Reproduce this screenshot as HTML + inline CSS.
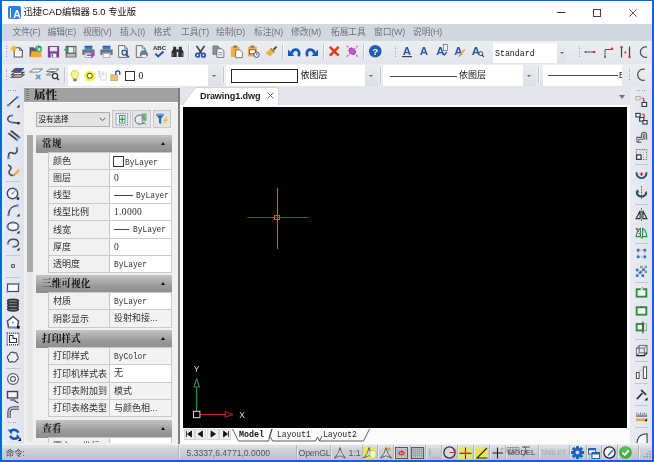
<!DOCTYPE html><html lang="zh"><head><meta charset="utf-8"><title>迅捷CAD编辑器 5.0 专业版</title><style>
*{box-sizing:border-box;margin:0;padding:0}
html,body{width:654px;height:462px;overflow:hidden;background:#fff}
body{position:relative;font-family:"Liberation Sans","Noto Sans CJK SC",sans-serif;font-size:10px;color:#222}
.a{position:absolute}
.mono{font-family:"Liberation Mono","Noto Sans CJK SC",monospace}
.cjk{font-family:"Liberation Sans","Noto Sans CJK SC",sans-serif}
.ser{font-family:"Liberation Serif","Noto Serif CJK SC",serif}
svg{position:absolute;overflow:visible}
.menu span{position:absolute;top:0;line-height:17px;font-size:8.8px;color:#6d727b;letter-spacing:-0.15px;white-space:nowrap}
.sep{position:absolute;width:1px;background:#c2c6cf}
.hsep{position:absolute;height:1px;background:#c2c6cf}
.row{position:absolute;left:48px;width:124px;height:17.2px;border-top:1px solid #c9c9c9}
.row .l{position:absolute;left:0;top:0;width:62px;height:100%;background:#f1f1f1;border-left:1px solid #c9c9c9;border-right:1px solid #c9c9c9;padding:1.200px 0 0 4px;line-height:14.5px;font-size:9px;color:#303030;white-space:nowrap;overflow:hidden}
.row .r{position:absolute;left:62px;top:0;width:62px;height:100%;background:#fff;padding:1px 0 0 4px;line-height:14.5px;font-size:9px;color:#303030;border-right:1px solid #c9c9c9;white-space:nowrap;overflow:hidden}
.sec{position:absolute;left:36px;width:136px;height:17.5px;background:linear-gradient(#c4c4c4,#9a9a9a 60%,#8e8e8e);font-size:9.7px;font-weight:bold;color:#111;line-height:17px;padding-left:6px}
.sec i{position:absolute;right:7px;top:7px;width:0;height:0;border-left:2.5px solid transparent;border-right:2.5px solid transparent;border-bottom:3px solid #111}
.sd{font-family:"Liberation Serif",serif;font-size:9.6px;letter-spacing:.3px}
.sx{display:inline-block;transform:scaleX(.82);transform-origin:0 50%;font-family:"Liberation Mono",monospace;font-size:9.6px}
</style></head><body><div id="root" style="position:absolute;left:0;top:0;width:654px;height:462px;will-change:transform">
<div class="a" style="left:0;top:0;width:654px;height:462px;background:#0b66d8"></div>
<div class="a" style="left:2px;top:1.3px;width:649.500px;height:458.5px;background:#e6e9ee"></div>
<div class="a" style="left:2px;top:1.3px;width:649.500px;height:22.700px;background:#fff"></div>
<div class="a" style="left:8px;top:6px;width:12.5px;height:12.5px;border-radius:2px;background:linear-gradient(#2d7cea,#3b78e0)"></div>
<div class="a" style="left:10.4px;top:8px;width:1.100px;height:10px;background:#e6efff"></div>
<div class="a" style="left:12.8px;top:7.5px;width:8px;font-size:11.3px;line-height:12.5px;font-weight:bold;color:#fff;text-align:center;transform:scaleX(.92)">A</div>
<div class="a" style="left:23.5px;top:1px;height:23px;line-height:23px;font-size:9.35px;color:#111;white-space:nowrap">迅捷CAD编辑器 5.0 专业版</div>
<div class="a" style="left:557px;top:12px;width:8px;height:1px;background:#333"></div>
<div class="a" style="left:593px;top:9px;width:7.500px;height:7.500px;border:1px solid #444"></div>
<svg style="left:629px;top:8.800px" width="8" height="8" viewBox="0 0 8 8"><path d="M.3.300l7.400 7.400M7.700.300l-7.400 7.400" stroke="#444" stroke-width=".9" fill="none"/></svg>
<div class="a menu" style="left:2px;top:24px;width:650px;height:17px;background:#d3d7df">
<span style="left:10.5px">文件(F)</span>
<span style="left:45.5px">编辑(E)</span>
<span style="left:81px">视图(V)</span>
<span style="left:118px">插入(I)</span>
<span style="left:151.5px">格式</span>
<span style="left:179px">工具(T)</span>
<span style="left:214px">绘制(D)</span>
<span style="left:252px">标注(N)</span>
<span style="left:289px">修改(M)</span>
<span style="left:329px">拓展工具</span>
<span style="left:372px">窗口(W)</span>
<span style="left:411px">说明(H)</span>
</div>
<div class="a" style="left:2px;top:41px;width:650px;height:23px;background:linear-gradient(#eceef2,#e2e5eb)"></div>
<div class="a" style="left:2px;top:64px;width:650px;height:23px;background:linear-gradient(#eceef2,#e2e5eb)"></div>
<div class="a" style="left:5.5px;top:46px;width:1px;height:12px;background:repeating-linear-gradient(#9aa0aa 0 1px,transparent 1px 2.4px)"></div>
<svg style="left:11.3px;top:45px" width="13" height="13" viewBox="0 0 12 12"><path d="M3 2.5h5l2.5 2.5v6h-7.5z" fill="#fff" stroke="#555" stroke-width="1"/><path d="M8 2.5v2.5h2.5" fill="none" stroke="#555" stroke-width=".8"/><path d="M2.5 0l.8 1.7 1.7-.8-.8 1.7 1.7.8-1.700.8.800 1.700-1.700-.8-.8 1.700-.8-1.700-1.700.8.800-1.700-1.700-.8 1.700-.8-.8-1.700 1.700.8z" fill="#f5b730"/></svg>
<svg style="left:28.9px;top:45px" width="13" height="13" viewBox="0 0 12 12"><path d="M.5 2h3.800l1 1.300h2.500v7.700h-7.300z" fill="#585d64"/><path d="M1.300 11.300l1-5.600h9.300v5.600z" fill="#f6a834"/><circle cx="8.900" cy="3.500" r="3" fill="#2aa565"/><path d="M7.600 2.300l2.400 2.400m0-2.100v2.100h-2.100" stroke="#fff" stroke-width=".9" fill="none"/></svg>
<svg style="left:46.5px;top:45px" width="13" height="13" viewBox="0 0 12 12"><path d="M.8 1h10.400v10.500h-10.400z" fill="#7a3f98"/><rect x="2.600" y="1.800" width="6.800" height="4" fill="#e8e6ea"/><rect x="3.400" y="8" width="5.200" height="3.500" fill="#f4f2f6"/><rect x="4.300" y="8.600" width="1.300" height="2.300" fill="#7a3f98"/></svg>
<svg style="left:63.9px;top:45px" width="13" height="13" viewBox="0 0 12 12"><rect x="1.500" y=".8" width="10" height="10.700" fill="#5c5f63"/><rect x="4" y="2" width="4.500" height="5" fill="#f2f2f2"/><rect x="9" y="2" width="1.600" height="5" fill="#c9c9c9"/><rect x="2.500" y="8.200" width="8" height="2.600" fill="#bdbdbd"/><path d="M0 4.500h3.500m-1.500-1.800l1.800 1.800-1.800 1.800" stroke="#21a366" stroke-width="1.200" fill="none"/></svg>
<svg style="left:81.7px;top:45px" width="13" height="13" viewBox="0 0 12 12"><rect x="2.500" y=".8" width="7" height="3.500" fill="#2f7fd6"/><rect x="2.500" y=".8" width="7" height="1.200" fill="#1c5fb0"/><path d="M.3 4.200h11.400v5h-2v-2h-7.400v2h-2z" fill="#6f7379"/><rect x="2.900" y="7.600" width="6.200" height="3.800" fill="#fafafa" stroke="#8a8d92" stroke-width=".6"/><path d="M4.500 9.500h6m-2-2.200l2.200 2.200-2.200 2.200" stroke="#a03fc8" stroke-width="1.400" fill="none"/></svg>
<svg style="left:99.5px;top:45px" width="13" height="13" viewBox="0 0 12 12"><rect x="2.500" y=".8" width="7" height="3.500" fill="#2f7fd6"/><rect x="2.500" y=".8" width="7" height="1.200" fill="#1c5fb0"/><path d="M.3 4.200h11.400v5h-2v-2h-7.400v2h-2z" fill="#6f7379"/><rect x="2.900" y="7.600" width="6.200" height="3.800" fill="#fafafa" stroke="#8a8d92" stroke-width=".6"/></svg>
<svg style="left:117.3px;top:45px" width="13" height="13" viewBox="0 0 12 12"><path d="M1.500.6h5.500l2.500 2.500v8.300h-8z" fill="#fdfdfd" stroke="#666" stroke-width=".9"/><path d="M7 .6v2.500h2.500" fill="#ddd" stroke="#666" stroke-width=".7"/><circle cx="6.800" cy="7" r="2.300" fill="#cfe3f7" stroke="#1d4f95" stroke-width="1.100"/><path d="M8.500 8.800l2.500 2.600" stroke="#1d4f95" stroke-width="1.500"/></svg>
<svg style="left:135.1px;top:45px" width="13" height="13" viewBox="0 0 12 12"><path d="M1.200.6h5.500l2.500 2.500v8.300h-8z" fill="#e8f3fb" stroke="#666" stroke-width=".9"/><path d="M6.700.6v2.500h2.500" fill="#ddd" stroke="#666" stroke-width=".7"/><rect x="5.800" y="5" width="4.800" height="2" fill="#2f7fd6"/><path d="M4.600 6.800h7.200v3.400h-7.200z" fill="#6f7379"/><rect x="6" y="9" width="4.400" height="2.600" fill="#fafafa" stroke="#888" stroke-width=".5"/></svg>
<svg style="left:153px;top:45px" width="13" height="13" viewBox="0 0 12 12"><text x="6" y="5" font-family="Liberation Sans,sans-serif" font-weight="bold" font-size="5.600" text-anchor="middle" fill="#2b2b2b">ABC</text><path d="M2.200 8l2.500 2.500 5-4.500" stroke="#1d4fae" stroke-width="1.800" fill="none"/></svg>
<svg style="left:170.7px;top:45px" width="13" height="13" viewBox="0 0 12 12"><path d="M2 1.500h2.800v3.500l.5 1v5h-4.800v-5l1.500-2zM7.200 1.500h2.800v2.500l1.500 2v5h-4.800v-5l.5-1z" fill="#2e2e2e"/><rect x="4.800" y="4" width="2.400" height="2.500" fill="#2e2e2e"/><rect x="1.200" y="7.500" width="1" height="3" fill="#777"/><rect x="9.800" y="7.500" width="1" height="3" fill="#777"/></svg>
<div class="sep" style="left:187.5px;top:44px;height:15px"></div>
<div class="sep" style="left:188.5px;top:44px;height:15px;background:#f6f7f9"></div>
<svg style="left:194px;top:45px" width="13" height="13" viewBox="0 0 12 12"><path d="M2.300.8l4.800 7M9.700.8l-4.800 7" stroke="#3c3f44" stroke-width="1.500" fill="none"/><circle cx="3.300" cy="9.400" r="1.700" fill="none" stroke="#1d57b5" stroke-width="1.500"/><circle cx="8.700" cy="9.400" r="1.700" fill="none" stroke="#1d57b5" stroke-width="1.500"/></svg>
<svg style="left:211.7px;top:45px" width="13" height="13" viewBox="0 0 12 12"><path d="M.8.800h4.500l2 2v6h-6.500z" fill="#8a8d91" stroke="#6a6d71" stroke-width=".6"/><path d="M4.500 3.500h4.500l2 2v6h-6.500z" fill="#eef3f8" stroke="#6a6d71" stroke-width=".8"/><path d="M6 7h3.500M6 9h3.500" stroke="#5a96d8" stroke-width=".8"/></svg>
<svg style="left:229.5px;top:45px" width="13" height="13" viewBox="0 0 12 12"><rect x=".8" y="1.500" width="8" height="9.500" rx=".8" fill="#f5ad3c"/><rect x="3" y=".5" width="3.600" height="2" fill="#7a7a7a"/><path d="M5.200 4.500h4l2.200 2.200v5h-6.200z" fill="#fdfdfd" stroke="#666" stroke-width=".8"/></svg>
<svg style="left:247.3px;top:45px" width="13" height="13" viewBox="0 0 12 12"><rect x=".8" y="1.500" width="8.500" height="9" rx=".8" fill="#f5ad3c"/><rect x="3.200" y=".5" width="3.600" height="2" fill="#7a7a7a"/><rect x="2.300" y="4.500" width="5.500" height="3.600" fill="#fff" stroke="#555" stroke-width=".8"/><circle cx="8.800" cy="9" r="2.500" fill="#f4f8fc" stroke="#2d4f80" stroke-width=".9"/><path d="M8.800 7.600v1.500h1.200" stroke="#2d4f80" stroke-width=".7" fill="none"/></svg>
<svg style="left:265.3px;top:45px" width="13" height="13" viewBox="0 0 12 12"><path d="M1 7.200l4.800-4.500 3.300 3.600-4.800 4.500z" fill="#f2b24a"/><path d="M4.800 3.600l.9-.9 3.400 3.600-.9.900z" fill="#a8782c"/><path d="M7.300 3.800l2.700-2.900 1.300 1.200-2.700 2.900z" fill="#4a4a4a"/><path d="M1 7.200l1.200 1.300M2.200 6.100l1.300 1.400" stroke="#c98c30" stroke-width=".5"/></svg>
<div class="sep" style="left:282px;top:44px;height:15px"></div>
<div class="sep" style="left:283px;top:44px;height:15px;background:#f6f7f9"></div>
<svg style="left:288.3px;top:46px" width="12" height="12" viewBox="0 0 12 12"><path d="M3.800 7.800c.2-5.500 7.400-5.500 7.400-.3 0 1-.4 2-1 2.600" fill="none" stroke="#1557c0" stroke-width="2.700"/><path d="M0 3.600v6.400h6.400z" fill="#1557c0"/></svg>
<svg style="left:306px;top:46px" width="12" height="12" viewBox="0 0 12 12"><path d="M8.200 7.800c-.2-5.500-7.400-5.500-7.400-.3 0 1 .4 2 1 2.600" fill="none" stroke="#1557c0" stroke-width="2.700"/><path d="M12 3.600v6.400h-6.400z" fill="#1557c0"/></svg>
<div class="sep" style="left:322.5px;top:44px;height:15px"></div>
<div class="sep" style="left:323.5px;top:44px;height:15px;background:#f6f7f9"></div>
<svg style="left:327.95px;top:45.25px" width="12.5" height="12.5" viewBox="0 0 12 12"><path d="M1.800 1.800l8.400 8.400M10.200 1.800l-8.400 8.400" stroke="#e03a1a" stroke-width="2.400" fill="none"/></svg>
<svg style="left:346.35px;top:45.25px" width="12.5" height="12.5" viewBox="0 0 12 12"><path d="M.8.800l10.400 10.400M11.200.8l-10.400 10.400" stroke="#d63ad0" stroke-width="1.100" stroke-dasharray="2 1.200" fill="none"/><rect x="2.400" y="3.300" width="7.200" height="5.400" rx="1.600" transform="rotate(40 6 6)" fill="#b946c8"/><rect x="4.300" y="4.700" width="3.400" height="2.600" rx=".9" transform="rotate(40 6 6)" fill="#8f8f9a"/></svg>
<div class="sep" style="left:363px;top:44px;height:15px"></div>
<div class="sep" style="left:364px;top:44px;height:15px;background:#f6f7f9"></div>
<svg style="left:369.05px;top:45.25px" width="12.5" height="12.5" viewBox="0 0 12 12"><circle cx="6" cy="6" r="6" fill="#1f5fb4"/><text x="6" y="9.300" font-family="Liberation Sans,sans-serif" font-weight="bold" font-size="9.500" text-anchor="middle" fill="#fff">?</text></svg>
<div class="a" style="left:394.5px;top:46px;width:1px;height:12px;background:repeating-linear-gradient(#9aa0aa 0 1px,transparent 1px 2.4px)"></div>
<svg style="left:400.5px;top:45px" width="12" height="12" viewBox="0 0 12 12"><text x="6" y="10" font-family="Liberation Sans,sans-serif" font-weight="bold" font-size="11.500" text-anchor="middle" fill="#2b56a8">A</text><rect x="1" y="11" width="10" height="1.200" fill="#444"/></svg>
<svg style="left:418px;top:45px" width="12" height="12" viewBox="0 0 12 12"><text x="6" y="10" font-family="Liberation Sans,sans-serif" font-weight="bold" font-size="11.500" text-anchor="middle" fill="#2b56a8">A</text></svg>
<svg style="left:436px;top:45px" width="12" height="12" viewBox="0 0 12 12"><text x="4.5" y="10" font-family="Liberation Sans,sans-serif" font-weight="bold" font-size="11.500" text-anchor="middle" fill="#2b56a8">A</text><rect x="7.500" y="-.5" width="3.800" height="6" fill="#f4f4f4" stroke="#666" stroke-width=".7"/><path d="M7 8.500l1.300 1.500 2.500-3" stroke="#1d57b5" stroke-width="1.200" fill="none"/></svg>
<svg style="left:453.5px;top:45px" width="12" height="12" viewBox="0 0 12 12"><text x="4.5" y="10" font-family="Liberation Sans,sans-serif" font-weight="bold" font-size="11.500" text-anchor="middle" fill="#2b56a8">A</text><path d="M5.200 10.800l5.600-6.300" stroke="#f0a63a" stroke-width="1.800"/><path d="M4.500 11.800l.7-1.600 .9.900z" fill="#555"/></svg>
<svg style="left:471.5px;top:45px" width="12" height="12" viewBox="0 0 12 12"><text x="4" y="10" font-family="Liberation Sans,sans-serif" font-weight="bold" font-size="11.500" text-anchor="middle" fill="#2b56a8">A</text><circle cx="8.800" cy="8.600" r="2" fill="#eef3f8" stroke="#333" stroke-width=".9"/><path d="M10.200 10.200l1.600 1.700" stroke="#333" stroke-width="1.200"/></svg>
<div class="a" style="left:492.700px;top:43px;width:73.500px;height:20px;background:#fff"></div>
<div class="a" style="left:556.5px;top:43px;width:9.700px;height:20px;background:linear-gradient(#e9ebef,#dcdfe5)"></div>
<div class="a" style="left:559.5px;top:52px;width:0;height:0;border-left:2.2px solid transparent;border-right:2.2px solid transparent;border-top:2.6px solid #666"></div>
<div class="a" style="left:494.5px;top:46.7px;line-height:12px;color:#111"><span class="sx" style="transform:scaleX(.86)">Standard</span></div>
<div class="a" style="left:578.5px;top:46px;width:1px;height:12px;background:repeating-linear-gradient(#9aa0aa 0 1px,transparent 1px 2.4px)"></div>
<svg style="left:584.3px;top:45.5px" width="12" height="12" viewBox="0 0 12 12"><path d="M1.500 6h8" stroke="#555" stroke-width="1"/><circle cx="1.500" cy="6" r="1" fill="#555"/><circle cx="10" cy="6" r="1.300" fill="#e8302a"/></svg>
<svg style="left:601.8px;top:45.5px" width="12" height="12" viewBox="0 0 12 12"><path d="M3 11v-7.500h6" stroke="#555" stroke-width="1" fill="none"/><circle cx="3" cy="11" r="1" fill="#555"/><circle cx="10" cy="2.800" r="1.300" fill="#e8302a"/></svg>
<svg style="left:619.2px;top:45.5px" width="12" height="12" viewBox="0 0 12 12"><path d="M2.500 .5v11M10.500 .5v11" stroke="#444" stroke-width="1.200"/><circle cx="2.500" cy="1.200" r="1.200" fill="#e8302a"/><circle cx="6.300" cy="6.500" r="1.100" fill="#e8302a"/><circle cx="10.500" cy="11" r="1.200" fill="#e8302a"/></svg>
<svg style="left:637px;top:45.5px" width="12" height="12" viewBox="0 0 12 12"><path d="M10 1.200a5.200 5.200 0 1 0 0 10" stroke="#555" stroke-width="1.200" fill="none"/></svg>
<div class="a" style="left:5.5px;top:69px;width:1px;height:12px;background:repeating-linear-gradient(#9aa0aa 0 1px,transparent 1px 2.4px)"></div>
<svg style="left:10.95px;top:67.45px" width="13.5" height="13.5" viewBox="0 0 12 12"><path d="M.5 9l3-2.200h8l-3 2.200z" fill="#fff" stroke="#444" stroke-width=".9"/><path d="M.5 6.800l3-2.200h8l-3 2.200z" fill="#fff" stroke="#444" stroke-width=".9"/><path d="M.5 4.200l3-2.800h8l-3 2.800z" fill="#2d5fa8" stroke="#2a4f88" stroke-width=".8"/><circle cx="5" cy="4.200" r="1.300" fill="#e02a2a"/></svg>
<svg style="left:28.75px;top:67.45px" width="13.5" height="13.5" viewBox="0 0 12 12"><path d="M.5 4.500l3.500-2.700h8l-3.500 2.700z" fill="#fff" stroke="#6a6d72" stroke-width=".8"/><path d="M6.200 6.800l4 4m0-4l-4 4" stroke="#5a9ad8" stroke-width="1.200"/><rect x="7" y="7.600" width="2.400" height="2.400" fill="#5a9ad8"/></svg>
<svg style="left:46.25px;top:67.45px" width="13.5" height="13.5" viewBox="0 0 12 12"><path d="M.5 4l3-2.200h8l-3 2.200z" fill="#fff" stroke="#6a6d72" stroke-width=".8"/><path d="M.5 7l3-2.200h4" fill="none" stroke="#6a6d72" stroke-width=".8"/><path d="M.5 7h4.500" stroke="#6a6d72" stroke-width=".8"/><circle cx="8" cy="8" r="2.300" fill="#f2f4f6" stroke="#333" stroke-width="1.100"/><path d="M9.700 9.700l1.800 1.800" stroke="#333" stroke-width="1.300"/></svg>
<div class="sep" style="left:64px;top:67px;height:16px"></div>
<div class="sep" style="left:65px;top:67px;height:16px;background:#f6f7f9"></div>
<div class="a" style="left:67.5px;top:64.600px;width:153px;height:21.200px;background:#fff"></div>
<div class="a" style="left:208px;top:64.600px;width:12.5px;height:21.200px;background:linear-gradient(#e9ebef,#dcdfe5)"></div>
<div class="a" style="left:211.5px;top:75px;width:0;height:0;border-left:2.2px solid transparent;border-right:2.2px solid transparent;border-top:2.6px solid #666"></div>
<svg style="left:69.3px;top:70px" width="11.8" height="11.8" viewBox="0 0 12 12"><path d="M6 .5c-2.400 0-3.900 1.800-3.900 3.700 0 1.800 1.600 2.800 1.900 4.800h4c.3-2 1.900-3 1.900-4.800 0-1.900-1.500-3.700-3.900-3.700z" fill="#f8f587" stroke="#b9b56a" stroke-width=".7"/><rect x="4.300" y="9" width="3.400" height="2.500" rx=".6" fill="#777"/></svg>
<svg style="left:83.55px;top:69.95px" width="11.5" height="11.5" viewBox="0 0 12 12"><path d="M6 0l1.400 2 2.300-.8-.1 2.500 2.400.7-1.500 1.900 1.500 2-2.400.6.100 2.500-2.300-.8-1.400 2-1.400-2-2.300.8.100-2.500-2.400-.6 1.500-2-1.500-1.900 2.400-.7-.1-2.500 2.300.8z" fill="#f2ee18"/><circle cx="6" cy="6" r="2.600" fill="#fffef0" stroke="#3a3a20" stroke-width=".9"/></svg>
<svg style="left:96.75px;top:69.95px" width="11.5" height="11.5" viewBox="0 0 12 12"><path d="M1 2h3M1 4h3M2.500 1v4M5.500 1.500v4M7 1v5M1 6.500h4" stroke="#c8ccd2" stroke-width=".8" fill="none"/><path d="M4 5v5.500h5.500v-8" stroke="#d5d8dc" stroke-width="1" fill="none"/></svg>
<svg style="left:110.25px;top:69.95px" width="11.5" height="11.5" viewBox="0 0 12 12"><rect x=".8" y="5" width="6.800" height="6.200" fill="#e6c27a" stroke="#b8924a" stroke-width=".6"/><path d="M6 5v-2.200c0-2.400 4.200-2.400 4.200 0v2.200" fill="none" stroke="#1f3f9a" stroke-width="1.300"/></svg>
<div class="a" style="left:124.5px;top:70.5px;width:10px;height:10.5px;border:1.2px solid #333;background:#fff"></div>
<div class="a" style="left:138.5px;top:69.5px;line-height:12px;color:#111"><span class="sd">0</span></div>
<div class="sep" style="left:222.5px;top:67px;height:16px"></div>
<div class="sep" style="left:223.5px;top:67px;height:16px;background:#f6f7f9"></div>
<div class="a" style="left:225.5px;top:64.600px;width:152px;height:21.200px;background:#fff"></div>
<div class="a" style="left:365px;top:64.600px;width:12.5px;height:21.200px;background:linear-gradient(#e9ebef,#dcdfe5)"></div>
<div class="a" style="left:369px;top:75px;width:0;height:0;border-left:2.2px solid transparent;border-right:2.2px solid transparent;border-top:2.6px solid #666"></div>
<div class="a" style="left:231px;top:69px;width:66.5px;height:13.5px;border:1.2px solid #222;background:#fff"></div>
<div class="a" style="left:300.5px;top:69px;line-height:13px;font-size:9px;color:#111;white-space:nowrap">依图层</div>
<div class="sep" style="left:380px;top:67px;height:16px"></div>
<div class="sep" style="left:381px;top:67px;height:16px;background:#f6f7f9"></div>
<div class="a" style="left:382.5px;top:64.600px;width:153px;height:21.200px;background:#fff"></div>
<div class="a" style="left:523px;top:64.600px;width:12.5px;height:21.200px;background:linear-gradient(#e9ebef,#dcdfe5)"></div>
<div class="a" style="left:527px;top:75px;width:0;height:0;border-left:2.2px solid transparent;border-right:2.2px solid transparent;border-top:2.6px solid #666"></div>
<div class="a" style="left:390px;top:75.600px;width:67px;height:.9px;background:#4a4a4a"></div>
<div class="a" style="left:459px;top:69px;line-height:13px;font-size:9px;color:#111;white-space:nowrap">依图层</div>
<div class="sep" style="left:538px;top:67px;height:16px"></div>
<div class="sep" style="left:539px;top:67px;height:16px;background:#f6f7f9"></div>
<div class="a" style="left:542.5px;top:64.600px;width:79px;height:21.200px;background:#fff;overflow:hidden"><div class="a" style="left:5.5px;top:10.900px;width:70px;height:.9px;background:#4a4a4a"></div><div class="a" style="left:76px;top:4.5px;line-height:12px;color:#111"><span class="sx">ByLayer</span></div></div>
<div class="a" style="left:628.5px;top:69px;width:1px;height:12px;background:repeating-linear-gradient(#9aa0aa 0 1px,transparent 1px 2.4px)"></div>
<svg style="left:634px;top:68px" width="13" height="13" viewBox="0 0 12 12"><path d="M10 1.200a5.200 5.200 0 1 0 0 10" stroke="#555" stroke-width="1.200" fill="none"/></svg>
<div class="a" style="left:2px;top:87px;width:22px;height:356.600px;background:linear-gradient(90deg,#e9ecf2,#dfe3eb)"></div>
<div class="a" style="left:8px;top:90px;width:9px;height:1px;background:repeating-linear-gradient(90deg,#9aa0aa 0 1px,transparent 1px 2.400px)"></div>
<svg style="left:6px;top:94.3px" width="14" height="14" viewBox="0 0 14 14"><path d="M2 11.500l9.500-8.500" stroke="#474a52" stroke-width="1.500"/><circle cx="2.200" cy="11.300" r="1.300" fill="#5b8fd6"/><circle cx="11.300" cy="3.200" r="1.300" fill="#5b8fd6"/><path d="M13.500 10.500v3h-3z" fill="#222"/></svg>
<svg style="left:6px;top:112.3px" width="14" height="14" viewBox="0 0 14 14"><path d="M6 3.500c-3.500 0-5 2.800-3.800 5 .8 1.500 2.300 1.800 3.500 1.900l6.300.6" fill="none" stroke="#474a52" stroke-width="1.500"/><circle cx="6" cy="3.500" r="1.200" fill="#5b8fd6"/><circle cx="5.600" cy="10.300" r="1.200" fill="#5b8fd6"/><rect x="11.300" y="10" width="2.400" height="2.400" fill="#222"/></svg>
<svg style="left:6px;top:128.8px" width="14" height="14" viewBox="0 0 14 14"><path d="M2.500 4.200l9 7M4.800 1.800l9 7" stroke="#474a52" stroke-width="2"/><circle cx="13" cy="8.500" r="1.200" fill="#5b8fd6"/><circle cx="11" cy="11" r="1.200" fill="#5b8fd6"/></svg>
<svg style="left:6px;top:146px" width="14" height="14" viewBox="0 0 14 14"><path d="M2.500 12v-2.500c0-3 2.500-3.500 4-2.500s4 1 4.500-2v-3" fill="none" stroke="#474a52" stroke-width="1.600"/><rect x="9.800" y="1" width="2.400" height="2.400" fill="#5b8fd6"/><rect x="1.300" y="10.800" width="2.400" height="2.400" fill="#5b8fd6"/></svg>
<svg style="left:6px;top:163.2px" width="14" height="14" viewBox="0 0 14 14"><path d="M2 2c3 1 4 3 2 5s-1 5 2 5.500" fill="none" stroke="#474a52" stroke-width="1.600"/><path d="M6.500 12l5.800-5.800 1.600 1.600-5.800 5.800z" fill="#f0a83a"/><path d="M5.500 13.500l1-2.300 1.500 1.500z" fill="#555"/></svg>
<div class="hsep" style="left:6px;top:181px;width:14px"></div>
<svg style="left:6px;top:185.5px" width="14" height="14" viewBox="0 0 14 14"><circle cx="6.500" cy="7.500" r="5.200" fill="#f4f6f9" stroke="#474a52" stroke-width="1.400"/><path d="M6.500 7.500l3.500-3.500" stroke="#5b8fd6" stroke-width="1"/><circle cx="6.500" cy="7.500" r="1" fill="#5b8fd6"/><circle cx="10.300" cy="3.700" r="1" fill="#5b8fd6"/><rect x="10.800" y="11.300" width="2.400" height="2.400" fill="#222"/></svg>
<svg style="left:6px;top:202.8px" width="14" height="14" viewBox="0 0 14 14"><path d="M2.500 12c0-5 3-9 9-9.500" fill="none" stroke="#474a52" stroke-width="1.500"/><circle cx="2.500" cy="12" r="1.300" fill="#5b8fd6"/><circle cx="11.500" cy="2.500" r="1.300" fill="#5b8fd6"/><circle cx="5" cy="5.500" r="1" fill="#5b8fd6"/><path d="M13.500 10.500v3h-3z" fill="#222"/></svg>
<svg style="left:6px;top:219.5px" width="14" height="14" viewBox="0 0 14 14"><ellipse cx="7" cy="6.500" rx="5.500" ry="4" fill="#f6f8fa" stroke="#474a52" stroke-width="1.500"/><circle cx="1.600" cy="6.500" r="1.200" fill="#5b8fd6"/><circle cx="7" cy="2.500" r="1.200" fill="#5b8fd6"/><circle cx="12.400" cy="6.500" r="1.200" fill="#5b8fd6"/><path d="M13.500 10.500v3h-3z" fill="#222"/></svg>
<svg style="left:6px;top:236.5px" width="14" height="14" viewBox="0 0 14 14"><path d="M2 6c1-5 10-5 10.500 0 .3 3-3 4-5 3.500" fill="none" stroke="#474a52" stroke-width="1.500"/><circle cx="2" cy="6.500" r="1.300" fill="#5b8fd6"/><circle cx="7.500" cy="9.800" r="1.300" fill="#5b8fd6"/><path d="M13.500 10.500v3h-3z" fill="#222"/></svg>
<div class="hsep" style="left:6px;top:254.5px;width:14px"></div>
<svg style="left:6px;top:258.5px" width="14" height="14" viewBox="0 0 14 14"><rect x="5.700" y="5.700" width="2.600" height="2.600" fill="#fff" stroke="#333" stroke-width=".9"/></svg>
<div class="hsep" style="left:6px;top:276.5px;width:14px"></div>
<svg style="left:6px;top:280.5px" width="14" height="14" viewBox="0 0 14 14"><rect x="1.500" y="3" width="11" height="7.500" fill="#fafbfc" stroke="#474a52" stroke-width="1.200"/><circle cx="12.500" cy="3" r="1.200" fill="#5b8fd6"/><circle cx="1.500" cy="10.500" r="1.200" fill="#5b8fd6"/></svg>
<svg style="left:6px;top:297.5px" width="14" height="14" viewBox="0 0 14 14"><ellipse cx="7" cy="11.3" rx="5.300" ry="1.500" fill="#8a8d92" stroke="#34373c" stroke-width="1.700"/><ellipse cx="7" cy="8.5" rx="5.300" ry="1.500" fill="#8a8d92" stroke="#34373c" stroke-width="1.700"/><ellipse cx="7" cy="5.7" rx="5.300" ry="1.500" fill="#8a8d92" stroke="#34373c" stroke-width="1.700"/><ellipse cx="7" cy="2.9" rx="5.300" ry="1.500" fill="#8a8d92" stroke="#34373c" stroke-width="1.700"/></svg>
<svg style="left:6px;top:315px" width="14" height="14" viewBox="0 0 14 14"><path d="M7 1.500l5.500 4.500-1 6.500h-9l-1-6.500z" fill="#f8f9fb" stroke="#474a52" stroke-width="1.500"/><circle cx="7" cy="7.500" r="1" fill="#5b8fd6"/><path d="M2.500 12.500h9" stroke="#5b8fd6" stroke-width="1.500"/><rect x="11" y="11" width="2.600" height="2.600" fill="#111"/></svg>
<svg style="left:6px;top:332.3px" width="14" height="14" viewBox="0 0 14 14"><rect x="1.200" y="1.200" width="11.600" height="11.600" fill="#fff" stroke="#444" stroke-width="1.400" stroke-dasharray="1 1"/><path d="M3.500 3.500h3.500v3h3.500v4h-7z" fill="#fff" stroke="#333" stroke-width="1.100"/></svg>
<svg style="left:6px;top:349.5px" width="14" height="14" viewBox="0 0 14 14"><path d="M3.500 4.500c0-2.500 3.500-3 4.500-1.500 1.500-1 4 .5 3 2.500 1.800 1 1.500 4-.5 4.500 0 2-3 2.800-4.500 1.500-1.500 1.300-4 .3-3.500-2-1.800-1-1.500-4 1-5z" fill="#f4f6f9" stroke="#474a52" stroke-width="1.200"/></svg>
<div class="hsep" style="left:6px;top:367.5px;width:14px"></div>
<svg style="left:6px;top:372.3px" width="14" height="14" viewBox="0 0 14 14"><circle cx="7" cy="7" r="5.400" fill="#f6f7f9" stroke="#5a5d63" stroke-width="1.100"/><circle cx="7" cy="7" r="2.400" fill="#fff" stroke="#5a5d63" stroke-width="1.100"/></svg>
<svg style="left:6px;top:389.5px" width="14" height="14" viewBox="0 0 14 14"><rect x="1.500" y="1.500" width="10" height="6.500" fill="#f4f4f6" stroke="#444" stroke-width="1.400"/><path d="M2.500 8l3 3h4l-1-3z" fill="#888"/><path d="M7 10l5.500 3" stroke="#444" stroke-width="1.400"/><path d="M4.500 10.500h4" stroke="#5b8fd6" stroke-width="1"/></svg>
<svg style="left:6px;top:404.7px" width="14" height="14" viewBox="0 0 14 14"><path d="M3 13v-5.500c0-3 2-4.500 4.500-4.500h5.500" fill="none" stroke="#4a4d52" stroke-width="3.400"/><path d="M3 13v-5.500c0-3 2-4.500 4.500-4.500h5.500" fill="none" stroke="#c8ccd2" stroke-width="1.300"/></svg>
<div class="a" style="left:8px;top:421.5px;width:9px;height:1px;background:repeating-linear-gradient(90deg,#9aa0aa 0 1px,transparent 1px 2.400px)"></div>
<svg style="left:6.55px;top:426.55px" width="14.5" height="14.5" viewBox="0 0 14 14"><path d="M11 5.500a4.500 4.500 0 0 0-7-1.800" fill="none" stroke="#1557c0" stroke-width="2.400"/><path d="M.8 2.500l5 .3-1.800 4.500z" fill="#1557c0"/><path d="M3 8.500a4.500 4.500 0 0 0 7 1.800" fill="none" stroke="#1557c0" stroke-width="2.400"/><path d="M13.200 11.500l-5-.3 1.800-4.500z" fill="#1557c0"/><path d="M13.500 10.500v3h-3z" fill="#111"/></svg>
<div class="a" style="left:24px;top:87px;width:156px;height:356.600px;background:#f0f0f0"></div>
<div class="a" style="left:24px;top:87.5px;width:153.5px;height:14px;background:#a2a2a2"></div>
<div class="a" style="left:26px;top:89px;width:3px;height:11px;background:repeating-linear-gradient(#6e6e6e 0 1px,#b4b4b4 1px 2px)"></div>
<div class="a ser" style="left:33.8px;top:88.3px;height:14px;line-height:14px;font-size:11.8px;font-weight:900;color:#1c1c1c;white-space:nowrap">属性</div>
<div class="a" style="left:24px;top:101.5px;width:153.5px;height:1.5px;background:#fafafa"></div>
<div class="a" style="left:177.5px;top:87.500px;width:2.5px;height:356.100px;background:#808080"></div>
<div class="a" style="left:36px;top:111.5px;width:73.5px;height:15px;background:#e3e3e3;border:1px solid #adadad"></div>
<div class="a" style="left:38.5px;top:112px;height:15px;line-height:15px;font-size:7.5px;color:#111;white-space:nowrap">没有选择</div>
<svg style="left:98.500px;top:117px" width="7" height="5" viewBox="0 0 7 5"><path d="M.7.900l2.800 2.800 2.800-2.800" fill="none" stroke="#444" stroke-width=".9"/></svg>
<div class="a" style="left:112.3px;top:109.700px;width:18.500px;height:18.800px;background:#e4e4e4;border:1px solid #c6c6c6"></div>
<div class="a" style="left:132px;top:109.700px;width:18.500px;height:18.800px;background:#e4e4e4;border:1px solid #c6c6c6"></div>
<div class="a" style="left:152.5px;top:109.700px;width:18.500px;height:18.800px;background:#e4e4e4;border:1px solid #c6c6c6"></div>
<svg style="left:114.500px;top:112px" width="14" height="14" viewBox="0 0 14 14"><rect x="1" y="1.500" width="11.500" height="11.500" fill="#eeeef6" stroke="#8070c8" stroke-width="1" stroke-dasharray="1.200 1"/><rect x="4.500" y="3.500" width="5.500" height="7.500" fill="#e6f2ea" stroke="#3f9a6a" stroke-width=".9"/><path d="M7.200 4.500v5.500M4.800 7.300h5" stroke="#2f8a4a" stroke-width="1.100"/></svg>
<svg style="left:134.300px;top:112px" width="14" height="14" viewBox="0 0 14 14"><circle cx="5.700" cy="7.600" r="4.600" fill="#e4eaf2" stroke="#5a6270" stroke-width="1"/><rect x="7.600" y="1.400" width="5" height="7.500" fill="#5aa870" opacity=".8"/><path d="M9 5.500v6.500l1.500-1.500 1.200 2.300" fill="#f4f4f4" stroke="#5a6270" stroke-width=".8"/></svg>
<svg style="left:154.600px;top:112px" width="14" height="14" viewBox="0 0 14 14"><path d="M1 2.800h8.200l-3 3.800v5.500l-2.200-1v-4.500z" fill="#2f66a8"/><ellipse cx="5.100" cy="2.800" rx="4.100" ry="1.300" fill="#5a9ad8"/><path d="M11.500 4.500l-3.500 4.500h2l-1.800 4 4.800-5.500h-2l1.500-3z" fill="#f2b42a"/></svg>
<div class="a" style="left:26.5px;top:135px;width:6px;height:306.500px;background:#e6e6e6"></div>
<div class="a" style="left:26.5px;top:135px;width:6px;height:136.500px;background:#a9a9a9"></div>
<div class="sec ser" style="top:135.3px">常规<i></i></div>
<div class="row" style="top:151.85px"><div class="l">颜色</div><div class="r" style="background:#fff"><b class="a" style="left:2.800px;top:2.700px;width:11.400px;height:11.500px;border:1.100px solid #333;background:#fff"></b><span style="padding-left:11px;position:relative;top:1.100px"><span class="sx">ByLayer</span></span></div></div>
<div class="row" style="top:169px"><div class="l">图层</div><div class="r" style="background:#fff"><span class="sd">0</span></div></div>
<div class="row" style="top:186.15px"><div class="l">线型</div><div class="r" style="background:#fff"><b class="a" style="left:4px;top:7.500px;width:19px;height:1px;background:#444"></b><span style="padding-left:21.700px"><span class="sx">ByLayer</span></span></div></div>
<div class="row" style="top:203.3px"><div class="l">线型比例</div><div class="r" style="background:#fff"><span class="sd">1.0000</span></div></div>
<div class="row" style="top:220.45px"><div class="l">线宽</div><div class="r" style="background:#fff"><b class="a" style="left:4px;top:7.500px;width:15px;height:1px;background:#444"></b><span style="padding-left:18.500px"><span class="sx">ByLayer</span></span></div></div>
<div class="row" style="top:237.6px"><div class="l">厚度</div><div class="r" style="background:#fff"><span class="sd">0</span></div></div>
<div class="row" style="top:254.75px"><div class="l">透明度</div><div class="r" style="background:#fff"><span class="sx">ByLayer</span></div></div>
<div class="a" style="left:48px;top:271.9px;width:124px;height:1px;background:#c9c9c9"></div>
<div class="sec ser" style="top:275.4px">三维可视化<i></i></div>
<div class="row" style="top:292.3px"><div class="l">材质</div><div class="r" style="background:#fff"><span class="sx">ByLayer</span></div></div>
<div class="row" style="top:309.45px"><div class="l">阴影显示</div><div class="r" style="background:#f3f3f3">投射和接...</div></div>
<div class="a" style="left:48px;top:326.6px;width:124px;height:1px;background:#c9c9c9"></div>
<div class="sec ser" style="top:330.4px">打印样式<i></i></div>
<div class="row" style="top:347.3px"><div class="l">打印样式</div><div class="r" style="background:#f3f3f3"><span class="sx">ByColor</span></div></div>
<div class="row" style="top:364.45px"><div class="l">打印机样式表</div><div class="r" style="background:#fff">无</div></div>
<div class="row" style="top:381.6px"><div class="l">打印表附加到</div><div class="r" style="background:#f3f3f3">模式</div></div>
<div class="row" style="top:398.75px"><div class="l">打印表格类型</div><div class="r" style="background:#f3f3f3">与颜色相...</div></div>
<div class="a" style="left:48px;top:415.9px;width:124px;height:1px;background:#c9c9c9"></div>
<div class="sec ser" style="top:420px">查看<i></i></div>
<div class="a" style="left:48px;top:437.3px;width:124px;height:5.700px;overflow:hidden"><div class="row" style="top:0;left:0"><div class="l">圆心 X 坐标</div><div class="r"></div></div></div>
<div class="a" style="left:180px;top:87px;width:451px;height:356.600px;background:#e3e6ec"></div>
<svg style="left:180px;top:86px" width="100" height="19" viewBox="0 0 100 19"><path d="M2.500 19L15.500 1.500h81q2 0 2 2v15.500z" fill="#fff"/><path d="M2.500 19L15.500 1.500h81q2 0 2 2v15.500" fill="none" stroke="#c9cdd5" stroke-width=".8"/></svg>
<div class="a" style="left:200px;top:87.7px;height:16px;line-height:16px;font-size:9.1px;font-weight:bold;color:#1a1a1a;white-space:nowrap;letter-spacing:-.1px">Drawing1.dwg</div>
<svg style="left:267.200px;top:92.300px" width="7" height="7" viewBox="0 0 7 7"><path d="M.7.700l5.600 5.600M6.300.700l-5.600 5.600" stroke="#666" stroke-width="1"/></svg>
<div class="a" style="left:619px;top:95px;width:0;height:0;border-left:3.500px solid transparent;border-right:3.500px solid transparent;border-top:4px solid #6e7178"></div>
<div class="a" style="left:180px;top:104.5px;width:449.5px;height:339.1px;background:#fdfdfd"></div>
<div class="a" style="left:183px;top:106.7px;width:444px;height:321.2px;background:#000"></div>
<div class="a" style="left:276.6px;top:187.5px;width:1.200px;height:61.500px;background:#2fae3c"></div>
<div class="a" style="left:246.5px;top:217.300px;width:62px;height:1.100px;background:#b32424"></div>
<div class="a" style="left:274.400px;top:215.300px;width:5.500px;height:5.200px;border:1px solid #e04a2a"></div>
<svg style="left:183px;top:360px" width="70" height="66" viewBox="0 0 70 66"><path d="M13.700 51v-23" stroke="#2fae3c" stroke-width="1"/><path d="M13.700 18.500l-2.800 8.500h5.600z" fill="none" stroke="#2fae3c" stroke-width="1"/><path d="M17 54.500h26" stroke="#c02a2a" stroke-width="1"/><path d="M50 54.500l-8-2.800v5.600z" fill="none" stroke="#c02a2a" stroke-width="1"/><rect x="10.500" y="51.300" width="6.400" height="6.400" fill="none" stroke="#ddd" stroke-width="1"/><text x="13.700" y="12" text-anchor="middle" font-family="Liberation Sans,sans-serif" font-size="8.500" fill="#ddd">Y</text><text x="59" y="57.500" text-anchor="middle" font-family="Liberation Sans,sans-serif" font-size="8.500" fill="#ddd">X</text></svg>
<div class="a" style="left:183px;top:427.9px;width:446.5px;height:13.600px;background:#fbfbfb"></div>
<div class="a" style="left:183.5px;top:428.5px;width:11.500px;height:11px;background:#ededed;border:1px solid #d6d6d6"></div>
<svg style="left:183.8px;top:429px" width="11" height="10" viewBox="0 0 11 10"><path d="M2.500 2v6M7.500 2v6l-4-3z" fill="#111" stroke="#111" stroke-width=".8"/></svg>
<div class="a" style="left:194.8px;top:428.5px;width:11.500px;height:11px;background:#ededed;border:1px solid #d6d6d6"></div>
<svg style="left:195.1px;top:429px" width="11" height="10" viewBox="0 0 11 10"><path d="M7.500 2v6l-4.500-3z" fill="#111" stroke="#111" stroke-width=".8"/></svg>
<div class="a" style="left:207px;top:428.5px;width:11.500px;height:11px;background:#ededed;border:1px solid #d6d6d6"></div>
<svg style="left:207.3px;top:429px" width="11" height="10" viewBox="0 0 11 10"><path d="M4 2v6l4.500-3z" fill="#111" stroke="#111" stroke-width=".8"/></svg>
<div class="a" style="left:219.3px;top:428.5px;width:11.500px;height:11px;background:#ededed;border:1px solid #d6d6d6"></div>
<svg style="left:219.6px;top:429px" width="11" height="10" viewBox="0 0 11 10"><path d="M3.500 2v6l4-3zM8.500 2v6" fill="#111" stroke="#111" stroke-width=".8"/></svg>
<svg style="left:231px;top:427.5px" width="140" height="14" viewBox="0 0 140 14"><path d="M1.500 1l6 12h30l3.500-12" fill="#fff" stroke="#333" stroke-width=".8"/><path d="M39.500 9l2 4h43l2-4M41 1l-3 8.500M88.500 13l2.500-5M86.500 9l2 4h44l6-12" fill="none" stroke="#333" stroke-width=".8"/></svg>
<div class="a mono" style="left:239px;top:428px;height:13px;line-height:13px;font-size:9.6px;font-weight:bold;color:#111;white-space:nowrap;transform:scaleX(.87);transform-origin:0 50%">Model</div>
<div class="a mono" style="left:276.5px;top:428px;height:13px;line-height:13px;font-size:9.6px;color:#222;white-space:nowrap;transform:scaleX(.84);transform-origin:0 50%">Layout1</div>
<div class="a mono" style="left:323px;top:428px;height:13px;line-height:13px;font-size:9.6px;color:#222;white-space:nowrap;transform:scaleX(.84);transform-origin:0 50%">Layout2</div>
<div class="a" style="left:631px;top:87px;width:20.500px;height:356.600px;background:linear-gradient(90deg,#e9ecf2,#dfe3eb)"></div>
<div class="a" style="left:636.500px;top:90px;width:9px;height:1px;background:repeating-linear-gradient(90deg,#9aa0aa 0 1px,transparent 1px 2.400px)"></div>
<svg style="left:634.5px;top:95.1px" width="13" height="13" viewBox="0 0 14 14"><rect x="1" y="1.500" width="4.500" height="3.800" fill="#f4f0d8" stroke="#999" stroke-width=".8"/><rect x="7.500" y="8" width="5" height="4.300" fill="#fff" stroke="#2a3550" stroke-width="1.200"/><path d="M7 3.500h2.500v3" fill="none" stroke="#d82a2a" stroke-width="1"/><path d="M8 5.500l1.500 2 1.500-2z" fill="#d82a2a"/></svg>
<svg style="left:634.5px;top:112px" width="13" height="13" viewBox="0 0 14 14"><rect x="1" y="1.500" width="4.500" height="3.800" fill="#fff" stroke="#2a3550" stroke-width="1.200"/><rect x="5" y="6" width="4.500" height="3.800" fill="#fff" stroke="#2a3550" stroke-width="1.200"/><rect x="8.500" y="9.200" width="4.500" height="3.800" fill="#fff" stroke="#2a3550" stroke-width="1.200"/><path d="M7 2.500h3v2.500" fill="none" stroke="#d82a2a" stroke-width="1"/><path d="M8.700 4.500l1.300 1.800 1.300-1.800z" fill="#d82a2a"/></svg>
<svg style="left:634.5px;top:129.5px" width="13" height="13" viewBox="0 0 14 14"><path d="M2 13v-5h5v-2.500c0-4 5.500-4 5.500 0v5" fill="none" stroke="#5a5d62" stroke-width="1.200"/><path d="M4 13v-3h5v-4.500c0-1.500 1.500-1.500 1.500 0v5" fill="none" stroke="#5a5d62" stroke-width="1"/><path d="M2 13.200h5" stroke="#5a5d62" stroke-width="1.200"/></svg>
<svg style="left:634.5px;top:147.5px" width="13" height="13" viewBox="0 0 14 14"><rect x="1.500" y="1.500" width="11" height="11" fill="none" stroke="#777" stroke-width="1.100" stroke-dasharray="1.500 1.200"/><path d="M5.500 1.500v11M9 1.500v11" stroke="#999" stroke-width=".7" stroke-dasharray="1.500 1.200"/><rect x="1.800" y="7.500" width="4.700" height="4.700" fill="#fff" stroke="#333" stroke-width="1.300"/></svg>
<div class="hsep" style="left:634.500px;top:163.5px;width:13px"></div>
<svg style="left:634.5px;top:168.5px" width="13" height="13" viewBox="0 0 14 14"><path d="M1.800 3.500a5.300 5.300 0 1 0 10.400 0" fill="none" stroke="#1f4f78" stroke-width="2"/><path d="M7 3.500v4M5 5.500h4" stroke="#d82a2a" stroke-width="1.200"/></svg>
<svg style="left:634.5px;top:185.5px" width="13" height="13" viewBox="0 0 14 14"><path d="M2.200 6a5 4.200 0 1 0 9.600 0" fill="none" stroke="#1f4f78" stroke-width="2.100"/><path d="M.5 6.500l2.500-3 1.500 3.500z" fill="#1f4f78"/><path d="M7 0v14" stroke="#d82a2a" stroke-width="1" stroke-dasharray="2 1"/></svg>
<div class="hsep" style="left:634.500px;top:204px;width:13px"></div>
<svg style="left:634.5px;top:207.8px" width="13" height="13" viewBox="0 0 14 14"><path d="M5.500 3l-4.300 8.500h4.300zM8.500 3l4.300 8.500h-4.300z" fill="#e8ecf0" stroke="#2a3040" stroke-width="1.200"/><path d="M7 0v14" stroke="#d82a2a" stroke-width="1.100" stroke-dasharray="2 1"/></svg>
<svg style="left:634.5px;top:225.8px" width="13" height="13" viewBox="0 0 14 14"><path d="M5.800 2.500c-2 1-4 5-4.500 9h4.500zM8.200 2.500c2 1 4 5 4.500 9h-4.500z" fill="#dff0e4" stroke="#2d8a4e" stroke-width="1.200"/><path d="M2 3l5 9.500" stroke="#d82a2a" stroke-width="1.100" stroke-dasharray="1.500 1"/><circle cx="1.800" cy="3" r="1" fill="#d82a2a"/><circle cx="7.500" cy="12.500" r="1" fill="#d82a2a"/></svg>
<div class="hsep" style="left:634.500px;top:242.5px;width:13px"></div>
<svg style="left:634.5px;top:246.8px" width="13" height="13" viewBox="0 0 14 14"><path d="M3.500 3.500h7v7h-7z" fill="none" stroke="#c8b8a0" stroke-width=".8"/><rect x="2" y="2" width="2.800" height="2.800" fill="#2a6fd0"/><rect x="9.200" y="2" width="2.800" height="2.800" fill="#2a6fd0"/><rect x="2" y="9.200" width="2.800" height="2.800" fill="#2a6fd0"/><rect x="9.200" y="9.200" width="2.800" height="2.800" fill="#2a6fd0"/></svg>
<svg style="left:634.5px;top:264.5px" width="13" height="13" viewBox="0 0 14 14"><g fill="#8a8e96"><rect x="5.500" y=".8" width="2.600" height="2.600"/><rect x="10.300" y=".8" width="2.600" height="2.600"/><rect x="5.500" y="6" width="2.600" height="2.600"/><rect x="10.300" y="6" width="2.600" height="2.600"/></g><g fill="#2a6fd0"><rect x="1" y="4" width="2.800" height="2.800"/><rect x="7.800" y="3.600" width="2.800" height="2.800"/><rect x="1" y="10" width="2.800" height="2.800"/><rect x="7" y="10" width="2.800" height="2.800"/><rect x="4" y="7" width="2.600" height="2.600"/></g></svg>
<div class="hsep" style="left:634.500px;top:281.5px;width:13px"></div>
<svg style="left:634.5px;top:286px" width="13" height="13" viewBox="0 0 14 14"><rect x="1.800" y="3.500" width="10.400" height="8" fill="#f4f8f4" stroke="#2d8a3e" stroke-width="2"/><path d="M6 4l2.500-2.500" stroke="#333" stroke-width="1"/><rect x="6" y="2.500" width="2.500" height="2" fill="#eef0f4"/></svg>
<svg style="left:634.5px;top:303.5px" width="13" height="13" viewBox="0 0 14 14"><rect x="1.800" y="3.500" width="10.400" height="8" fill="#f4f8f4" stroke="#2d8a3e" stroke-width="2"/><path d="M5.500 3.300h3" stroke="#555" stroke-width="1"/></svg>
<svg style="left:634.5px;top:321.2px" width="13" height="13" viewBox="0 0 14 14"><rect x="1.800" y="3.200" width="7" height="7" fill="#f4f8f4" stroke="#2d8a3e" stroke-width="2"/><rect x="8.500" y="3" width="4" height="7.500" fill="none" stroke="#6a9a74" stroke-width=".8"/><path d="M8.500 .5v13" stroke="#333" stroke-width="1"/></svg>
<div class="hsep" style="left:634.500px;top:338.5px;width:13px"></div>
<svg style="left:634.5px;top:343.9px" width="13" height="13" viewBox="0 0 14 14"><path d="M1.500 4.500h8.500v8h-8.500zM1.500 4.500l3-3h8.500l-3 3M13 1.500v8l-3 3M4.500 1.500v8l-3 3M4.500 9.500h8.500" fill="none" stroke="#555" stroke-width=".9"/><path d="M1.500 12.500h8.500l3-3" fill="none" stroke="#222" stroke-width="1.200"/></svg>
<div class="hsep" style="left:634.500px;top:360.5px;width:13px"></div>
<svg style="left:634.5px;top:365.5px" width="13" height="13" viewBox="0 0 14 14"><rect x="1.500" y="7" width="3" height="6.500" fill="#fff" stroke="#444" stroke-width="1"/><rect x="9" y="1" width="3.500" height="12.500" fill="#fff" stroke="#444" stroke-width="1"/><path d="M4.500 6l4-3.500" stroke="#aaa" stroke-width=".7"/></svg>
<div class="hsep" style="left:634.500px;top:382.5px;width:13px"></div>
<svg style="left:634.5px;top:387.5px" width="13" height="13" viewBox="0 0 14 14"><path d="M2 12l6-6.500" stroke="#333" stroke-width="1.800"/><path d="M6.500 2l5.500 5.500" stroke="#333" stroke-width="1.800"/><path d="M13.500 10v3.500h-3.500z" fill="#222"/></svg>
<div class="hsep" style="left:634.500px;top:404.5px;width:13px"></div>
<svg style="left:634.5px;top:410px" width="13" height="13" viewBox="0 0 14 14"><path d="M1 6.500h12" stroke="#2a4a7a" stroke-width="1.200"/><path d="M2 2.500v3M4 3.500v2M6 2.500v3M8 3.500v2M10 2.500v3M12 3.500v2" stroke="#666" stroke-width=".8"/><rect x="1" y="9" width="12" height="3" fill="#f0a83a"/><path d="M13 9v3h-3z" fill="#222"/></svg>
<div class="hsep" style="left:634.500px;top:426.5px;width:13px"></div>
<div class="a" style="left:631px;top:428px;width:20.500px;height:15px;overflow:hidden"><svg style="left:3.5px;top:2.5px" width="13" height="13" viewBox="0 0 14 14"><path d="M2 14c0-7 4-11 11-11v11" fill="#f4f6f8" stroke="#444" stroke-width="1.200"/></svg></div>
<div class="a" style="left:2px;top:443.600px;width:649.500px;height:16.200px;background:linear-gradient(#e2e4e9 0,#dadde3 22%,#d0d3da 30%,#bfc3cb 100%)"></div>
<div class="a" style="left:2px;top:443.600px;width:649.500px;height:.8px;background:#eef0f3"></div>
<div class="a" style="left:5.800px;top:445.900px;height:14px;line-height:14px;font-size:8.400px;color:#3a3a3a;white-space:nowrap">命令:</div>
<div class="a" style="left:177.5px;top:445px;width:1px;height:14px;background:#aeb3bc"></div>
<div class="a" style="left:178.5px;top:445px;width:1px;height:14px;background:#e6e8ec"></div>
<div class="a" style="left:295.5px;top:445px;width:1px;height:14px;background:#aeb3bc"></div>
<div class="a" style="left:296.5px;top:445px;width:1px;height:14px;background:#e6e8ec"></div>
<div class="a" style="left:330px;top:445px;width:1px;height:14px;background:#aeb3bc"></div>
<div class="a" style="left:331px;top:445px;width:1px;height:14px;background:#e6e8ec"></div>
<div class="a" style="left:361.5px;top:445px;width:1px;height:14px;background:#aeb3bc"></div>
<div class="a" style="left:362.5px;top:445px;width:1px;height:14px;background:#e6e8ec"></div>
<div class="a" style="left:377.2px;top:445px;width:1px;height:14px;background:#aeb3bc"></div>
<div class="a" style="left:378.2px;top:445px;width:1px;height:14px;background:#e6e8ec"></div>
<div class="a" style="left:392.8px;top:445px;width:1px;height:14px;background:#aeb3bc"></div>
<div class="a" style="left:393.8px;top:445px;width:1px;height:14px;background:#e6e8ec"></div>
<div class="a" style="left:409.5px;top:445px;width:1px;height:14px;background:#aeb3bc"></div>
<div class="a" style="left:410.5px;top:445px;width:1px;height:14px;background:#e6e8ec"></div>
<div class="a" style="left:425.2px;top:445px;width:1px;height:14px;background:#aeb3bc"></div>
<div class="a" style="left:426.2px;top:445px;width:1px;height:14px;background:#e6e8ec"></div>
<div class="a" style="left:441.2px;top:445px;width:1px;height:14px;background:#aeb3bc"></div>
<div class="a" style="left:442.2px;top:445px;width:1px;height:14px;background:#e6e8ec"></div>
<div class="a" style="left:457.2px;top:445px;width:1px;height:14px;background:#aeb3bc"></div>
<div class="a" style="left:458.2px;top:445px;width:1px;height:14px;background:#e6e8ec"></div>
<div class="a" style="left:473.2px;top:445px;width:1px;height:14px;background:#aeb3bc"></div>
<div class="a" style="left:474.2px;top:445px;width:1px;height:14px;background:#e6e8ec"></div>
<div class="a" style="left:489px;top:445px;width:1px;height:14px;background:#aeb3bc"></div>
<div class="a" style="left:490px;top:445px;width:1px;height:14px;background:#e6e8ec"></div>
<div class="a" style="left:505px;top:445px;width:1px;height:14px;background:#aeb3bc"></div>
<div class="a" style="left:506px;top:445px;width:1px;height:14px;background:#e6e8ec"></div>
<div class="a" style="left:538px;top:445px;width:1px;height:14px;background:#aeb3bc"></div>
<div class="a" style="left:539px;top:445px;width:1px;height:14px;background:#e6e8ec"></div>
<div class="a" style="left:569px;top:445px;width:1px;height:14px;background:#aeb3bc"></div>
<div class="a" style="left:570px;top:445px;width:1px;height:14px;background:#e6e8ec"></div>
<div class="a" style="left:585.5px;top:445px;width:1px;height:14px;background:#aeb3bc"></div>
<div class="a" style="left:586.5px;top:445px;width:1px;height:14px;background:#e6e8ec"></div>
<div class="a" style="left:601.3px;top:445px;width:1px;height:14px;background:#aeb3bc"></div>
<div class="a" style="left:602.3px;top:445px;width:1px;height:14px;background:#e6e8ec"></div>
<div class="a" style="left:617.2px;top:445px;width:1px;height:14px;background:#aeb3bc"></div>
<div class="a" style="left:618.2px;top:445px;width:1px;height:14px;background:#e6e8ec"></div>
<div class="a" style="left:637.5px;top:445px;width:1px;height:14px;background:#aeb3bc"></div>
<div class="a" style="left:638.5px;top:445px;width:1px;height:14px;background:#e6e8ec"></div>
<div class="a" style="left:186.500px;top:445.500px;height:14px;line-height:14px;font-size:8.600px;color:#555;white-space:nowrap">5.3337,6.4771,0.0000</div>
<div class="a" style="left:298.500px;top:445.500px;height:14px;line-height:14px;font-size:8.800px;color:#555;white-space:nowrap;letter-spacing:-.2px">OpenGL</div>
<div class="a" style="left:348.500px;top:445.500px;height:14px;line-height:14px;font-size:8.800px;color:#555;white-space:nowrap">1:1</div>
<svg style="left:333.5px;top:446.500px" width="12" height="12" viewBox="0 0 12 12"><path d="M6 .6l1.700 5.400 3.700 5-5.400-2.400-5.400 2.400 3.700-5z" fill="#fff" stroke="#3c3c3c" stroke-width=".75" stroke-linejoin="round"/><path d="M6 .6v5.900l-5.400 4.500M6 6.500l5.400 4.500" fill="none" stroke="#555" stroke-width=".4"/></svg>
<div class="a" style="left:363.300px;top:447px;width:13px;height:12px;background:#e8e65a"></div>
<svg style="left:362.5px;top:446.500px" width="12" height="12" viewBox="0 0 12 12"><path d="M6 .6l1.700 5.400 3.700 5-5.400-2.400-5.400 2.400 3.700-5z" fill="#fff" stroke="#3c3c3c" stroke-width=".75" stroke-linejoin="round"/><path d="M6 .6v5.900l-5.400 4.500M6 6.500l5.400 4.500" fill="none" stroke="#555" stroke-width=".4"/></svg>
<svg style="left:369px;top:450px" width="8" height="9" viewBox="0 0 8 9"><path d="M1 2c2-2 5-2 6 0v3c0 2-2 3-3 3.500-1-.5-3-1.500-3-3.500z" fill="#f6f6c8" stroke="#b8b44a" stroke-width=".6"/></svg>
<svg style="left:379.5px;top:446.500px" width="12" height="12" viewBox="0 0 12 12"><path d="M6 .6l1.700 5.400 3.700 5-5.400-2.400-5.400 2.400 3.700-5z" fill="#fff" stroke="#3c3c3c" stroke-width=".75" stroke-linejoin="round"/><path d="M6 .6v5.900l-5.400 4.500M6 6.500l5.400 4.500" fill="none" stroke="#555" stroke-width=".4"/></svg>
<svg style="left:386px;top:446px" width="6" height="6" viewBox="0 0 6 6"><path d="M3 0l.8 2.200 2.200.8-2.200.8-.8 2.200-.8-2.200-2.200-.8 2.200-.8z" fill="#d89a3a"/></svg>
<svg style="left:395px;top:446.500px" width="13" height="12" viewBox="0 0 13 12"><rect x=".5" y=".5" width="12" height="11" fill="#c9cdd4" stroke="#555" stroke-width="1"/><path d="M3 .5v11M6.500 .5v11M10 .5v11M.5 3h12M.5 6h12M.5 9h12" stroke="#9a9ea6" stroke-width=".6"/><path d="M2.500 6h8M6.500 3v6" stroke="#e05050" stroke-width=".5"/><rect x="4.300" y="4.500" width="4.400" height="3.200" rx="1" fill="none" stroke="#e02828" stroke-width="1.100"/></svg>
<svg style="left:411.300px;top:446.500px" width="13" height="12" viewBox="0 0 13 12"><rect x=".5" y=".5" width="12" height="11" fill="#c4c8cf" stroke="#555" stroke-width="1"/><path d="M2.500 .5v11M4.500 .5v11M6.500 .5v11M8.500 .5v11M10.500 .5v11M.5 2.500h12M.5 4.500h12M.5 6.500h12M.5 8.500h12" stroke="#8f939b" stroke-width=".6"/></svg>
<svg style="left:427.500px;top:446.500px" width="13" height="12" viewBox="0 0 13 12"><path d="M2 1v10h10.500" fill="none" stroke="#b8bcc4" stroke-width="1"/><path d="M2 3v5" stroke="#6ac07a" stroke-width=".8"/><path d="M3 11h8" stroke="#e08a8a" stroke-width=".8" stroke-dasharray="1.500 1"/></svg>
<svg style="left:442.800px;top:446.300px" width="13" height="13" viewBox="0 0 13 13"><circle cx="6.500" cy="6.500" r="5.600" fill="#d8dbe1" stroke="#333" stroke-width="1.300"/><path d="M6.500 6.500h6M10 4.500l2.500-1" stroke="#e02a2a" stroke-width="1.200"/></svg>
<div class="a" style="left:459px;top:446.500px;width:13px;height:12.500px;background:#e6e45a"></div>
<svg style="left:459px;top:446.500px" width="13" height="12.500" viewBox="0 0 13 12.500"><path d="M6.500 .5v11.500M.5 6.300h12" stroke="#222" stroke-width="1"/><path d="M6.500 3.500v5.500M3.500 6.300h6" stroke="#e02a2a" stroke-width="1.200"/></svg>
<div class="a" style="left:474.800px;top:446.500px;width:13px;height:12.500px;background:#e6e45a"></div>
<svg style="left:474.800px;top:446.500px" width="13" height="12.500" viewBox="0 0 13 12.500"><path d="M12 1l-10 10h10.500" fill="none" stroke="#222" stroke-width="1.100"/></svg>
<svg style="left:491.500px;top:446.500px" width="12" height="12" viewBox="0 0 12 12"><path d="M5.500 .5v11M.5 6h10.500" stroke="#222" stroke-width="1.100"/><path d="M9 1l2 .5-1.500 1.500" fill="none" stroke="#e06a6a" stroke-width=".7"/></svg>
<div class="a" style="left:507.500px;top:445.500px;height:14px;line-height:14.500px;font-size:8px;color:#3a3e45;white-space:nowrap;letter-spacing:-.1px">MODEL</div>
<svg style="left:507px;top:446px" width="30" height="13" viewBox="0 0 30 13"><path d="M0 1.500h12v5h-12zM3 1.500v5M6 1.500v5M9 1.500v5M0 4h12" fill="none" stroke="#7a7e86" stroke-width=".7"/><path d="M1 8h5" stroke="#e04040" stroke-width="1"/><path d="M15 1h8M17 1c3 1 2 6-1 9.500" fill="none" stroke="#444" stroke-width=".9"/></svg>
<div class="a" style="left:540.500px;top:445.500px;height:14px;line-height:14.500px;font-size:7.600px;color:#a4a8b0;white-space:nowrap;letter-spacing:-.45px">TABLET</div>
<svg style="left:571.300px;top:446.300px" width="13" height="13" viewBox="0 0 13 13"><g fill="#1c5fc4"><circle cx="6.500" cy="6.500" r="4.600"/><g id="t"><rect x="5" y="0" width="3" height="13" rx=".5"/></g><rect x="5" y="0" width="3" height="13" rx=".5" transform="rotate(45 6.500 6.500)"/><rect x="5" y="0" width="3" height="13" rx=".5" transform="rotate(90 6.500 6.500)"/><rect x="5" y="0" width="3" height="13" rx=".5" transform="rotate(135 6.500 6.500)"/></g><circle cx="6.500" cy="6.500" r="2" fill="#d0d4da"/></svg>
<svg style="left:588px;top:447.500px" width="12" height="11" viewBox="0 0 12 11"><rect x=".5" y=".5" width="7" height="5.500" fill="#fff" stroke="#2a5fb4" stroke-width="1"/><rect x=".5" y=".5" width="7" height="1.800" fill="#2a5fb4"/><rect x="4" y="4.500" width="7.500" height="6" fill="#fff" stroke="#2a5fb4" stroke-width="1"/><rect x="4" y="4.500" width="7.500" height="2" fill="#2a5fb4"/></svg>
<svg style="left:603px;top:446.300px" width="13" height="13" viewBox="0 0 13 13"><circle cx="6.500" cy="6.500" r="5.600" fill="#f4f6f9" stroke="#222" stroke-width="1.300"/><path d="M5 9.500l5-5.500" stroke="#2a7ad8" stroke-width="1.800"/></svg>
<svg style="left:619px;top:446.300px" width="13" height="13" viewBox="0 0 13 13"><circle cx="6.500" cy="6.500" r="6.300" fill="#3fae3f"/><circle cx="6.500" cy="5" r="4.500" fill="#6cc86c" opacity=".5"/><path d="M3.300 6.500l2.400 2.500 4-4.800" fill="none" stroke="#fff" stroke-width="1.700"/></svg>
<svg style="left:643px;top:451px" width="8" height="8" viewBox="0 0 8 8"><g fill="#8e939c"><rect x="6" y="0" width="1.400" height="1.400"/><rect x="3.500" y="2.500" width="1.400" height="1.400"/><rect x="6" y="2.500" width="1.400" height="1.400"/><rect x="1" y="5" width="1.400" height="1.400"/><rect x="3.500" y="5" width="1.400" height="1.400"/><rect x="6" y="5" width="1.400" height="1.400"/></g></svg>
</div></body></html>
